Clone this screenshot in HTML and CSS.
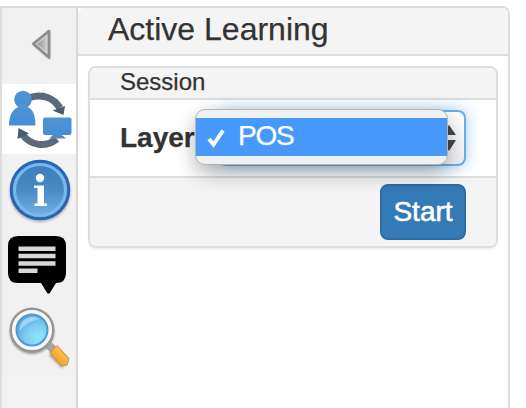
FILE: index.html
```html
<!DOCTYPE html>
<html lang="en">
<head>
<meta charset="utf-8">
<title>Active Learning</title>
<link rel="stylesheet" href="styles.css">
</head>
<body>
<div class="workspace">
  <nav class="sidebar">
    <div class="tab tab-collapse">
      <svg width="74" height="76" viewBox="2 8 74 76">
        <defs>
          <linearGradient id="arrow"><stop offset="0" stop-color="#999"/><stop offset=".5" stop-color="#aeb0b3"/><stop offset="1" stop-color="#ccc"/></linearGradient>
          <filter id="soft" x="-30%" y="-30%" width="160%" height="160%"><feGaussianBlur stdDeviation="1.2"/></filter>
        </defs>
        <path d="M33 45L50 32V60Z" fill="#777" opacity=".45" filter="url(#soft)"/>
        <path d="M33.300 43.800L49 31V57.500Z" fill="#d8d8d8" stroke="#8c8c8c" stroke-width="2.800" stroke-linejoin="round"/>
        <path d="M37 44L46.500 36V52Z" fill="url(#arrow)"/>
      </svg>
    </div>
    <div class="tab tab-active">
      <svg width="74" height="70" viewBox="2 84 74 70">
        <defs><linearGradient id="person" x2="0" y2="1"><stop stop-color="#5293cf"/><stop offset="1" stop-color="#438fd9"/></linearGradient></defs>
        <g fill="none" stroke="#5a6a7b" stroke-width="7">
          <path d="M30 97.500C42 94 53 97 60 108"/>
          <path d="M22 134C31 146 45 148 57 139"/>
        </g>
        <path d="M65 106L63.500 115L52.500 110.500ZM17.500 139L18.500 128L29 133.500Z" fill="#4c5c6e"/>
        <circle cx="23" cy="99.500" r="8.800" fill="url(#person)"/>
        <path d="M9 125.500C9 114 14 108 19 107V104H27V107C32 108 35.500 114 35.500 125.500Z" fill="url(#person)"/>
        <rect x="43" y="117.500" width="28.500" height="17.500" rx="2" fill="url(#person)"/>
        <path d="M53 135H62L66 138.500H49Z" fill="#5d88b4"/>
      </svg>
    </div>
    <div class="tab tab-info">
      <svg width="74" height="76" viewBox="2 154 74 76">
        <defs>
          <linearGradient id="info" x2="0" y2="1"><stop stop-color="#397dbb"/><stop offset=".5" stop-color="#488bc5"/><stop offset="1" stop-color="#72afe0"/></linearGradient>
        </defs>
        <ellipse cx="40" cy="192" rx="30.500" ry="30" fill="#555" opacity=".4" filter="url(#soft)"/>
        <circle cx="40" cy="190" r="29.500" fill="#2c69b1" stroke="#2464b2" stroke-width="1.500"/>
        <circle cx="40" cy="190" r="25.500" fill="url(#info)" stroke="#79b8eb" stroke-width="3.200"/>
        <circle cx="40" cy="178" r="4.200" fill="#fff"/>
        <path d="M34 185.500H44V203.500H47V206H34.500V203.500H37.500V188H34Z" fill="#fff"/>
      </svg>
    </div>
    <div class="tab tab-comment">
      <svg width="74" height="74" viewBox="2 230 74 74">
        <path d="M18 236H56Q66 236 66 246V273Q66 283 56 283L49.500 293.500H47.500L41 283H18Q8 283 8 273V246Q8 236 18 236Z"/>
        <path d="M18.500 248.700H55.500M18.500 256H55.500M18.500 263.500H55.500M18.500 270.700H37.500" stroke="#d8d8d8" stroke-width="4.500"/>
      </svg>
    </div>
    <div class="tab tab-search">
      <svg width="74" height="72" viewBox="2 304 74 72">
        <defs>
          <radialGradient id="lens" cx=".7" cy=".75" r=".8"><stop stop-color="#8de9ff"/><stop offset=".55" stop-color="#7dc7f0"/><stop offset="1" stop-color="#55a7e1"/></radialGradient>
          <linearGradient id="handle" x1="0" y1="1" x2="1" y2="0"><stop stop-color="#e18a12"/><stop offset=".6" stop-color="#ffb94a"/><stop offset="1" stop-color="#d99127"/></linearGradient>
        </defs>
        <g opacity=".4" filter="url(#soft)"><circle cx="32" cy="332" r="22"/><path d="M52 352L65 365" stroke="#333" stroke-width="9"/></g>
        <path d="M46 343L55 351" stroke="#a3a3a3" stroke-width="8"/>
        <circle cx="32" cy="330" r="21.300" fill="#f8f8f8" stroke="#969696" stroke-width="2.500"/>
        <circle cx="32" cy="330" r="15.500" fill="url(#lens)" stroke="#4f98d2" stroke-width="2"/>
        <path d="M20 331C18 321 29 313 40 319C33 320 24 324 20 331Z" fill="#c8eaff" opacity=".6"/>
        <path d="M50 352.500L57 345.500L69 358.500L67 365L61 365.500Z" fill="url(#handle)" stroke="#d39132"/>
      </svg>
    </div>
    <div class="sidebar-rest"></div>
  </nav>
  <main class="panel">
    <header class="panel-title">Active Learning</header>
    <section class="card">
      <div class="card-header">Session</div>
      <div class="card-body">
        <label class="field-label">Layer</label>
        <div class="select">
          <svg class="select-arrows" width="14" height="26" viewBox="0 0 14 26"><path d="M0 10L7 0L14 10ZM0 15H14L7 26Z" fill="#484848"/></svg>
          <div class="menu">
            <div class="option">
              <svg width="20" height="20" viewBox="0 0 20 20"><path d="M3 11L7.500 16.500L17 2.500" fill="none" stroke="#fff" stroke-width="4"/></svg>
              <span class="option-text">POS</span>
            </div>
          </div>
        </div>
      </div>
      <footer class="card-footer"><button class="button">Start</button></footer>
    </section>
  </main>
</div>
</body>
</html>
```
FILE: styles.css
```css
* { box-sizing: border-box; }
body {
  margin: 0;
  height: 408px;
  overflow: hidden;
  background: #fff;
  color: #333;
  font-family: "Liberation Sans", Arial, sans-serif;
  -webkit-text-stroke: .25px currentColor;
}
.workspace {
  display: flex;
  width: 510px;
  height: 420px;
  margin-top: 6px;
  border: 2px solid #ddd;
  border-bottom: 0;
  border-top-right-radius: 8px;
}
.sidebar {
  display: flex;
  flex-direction: column;
  width: 76px;
  border-right: 2px solid #d8d8d8;
  background: #f1f1f1;
}
.tab { flex: none; }
.tab svg { display: block; }
.tab-active { background: #fff; }
.sidebar-rest { flex: 1; background: #f3f3f3; }
.panel { flex: 1; }
.panel-title {
  height: 48px;
  padding-left: 30px;
  border-bottom: 2px solid #ddd;
  border-radius: 6px 6px 0 0;
  background: #f4f4f4;
  font-size: 32px;
  line-height: 43px;
}
.card {
  width: 410px;
  height: 182px;
  margin: 10px 0 0 10px;
  border: 2px solid #ddd;
  border-radius: 8px;
  box-shadow: 0 2px 2px rgba(0, 0, 0, .05);
}
.card-header {
  height: 32px;
  padding-left: 30px;
  border-bottom: 2px solid #ddd;
  border-radius: 6px 6px 0 0;
  background: #f4f4f4;
  font-size: 24px;
  line-height: 28px;
}
.card-body {
  display: flex;
  align-items: center;
  height: 76px;
  padding: 0 30px;
}
.field-label {
  width: 98px;
  font-size: 28px;
  font-weight: bold;
}
.select {
  position: relative;
  display: flex;
  align-items: center;
  justify-content: flex-end;
  width: 248px;
  height: 56px;
  padding-right: 8px;
  border: 2px solid #66afe9;
  border-radius: 8px;
  background: linear-gradient(#fff, #f0f0f0);
  box-shadow: 0 0 16px rgba(102, 175, 233, .6);
}
.menu {
  position: absolute;
  top: -3px;
  left: -25px;
  width: 253px;
  height: 56px;
  padding: 8px 0;
  border: 1px solid #b4b4b4;
  border-radius: 10px;
  background: #f0f0f0;
  box-shadow: 0 8px 20px rgba(0, 0, 0, .3);
}
.option {
  display: flex;
  align-items: center;
  height: 38px;
  padding-left: 10px;
  background: #4899fc;
  color: #fff;
  font-size: 28px;
  line-height: 36px;
}
.option svg { margin-top: 2px; }
.option-text {
  margin: -2px 0 0 12px;
  letter-spacing: -1.2px;
}
.card-footer {
  display: flex;
  justify-content: flex-end;
  height: 70px;
  padding: 6px 30px;
  border-top: 2px solid #ddd;
  border-radius: 0 0 6px 6px;
  background: #f4f4f4;
}
.button {
  width: 86px;
  height: 56px;
  padding: 0;
  border: 2px solid #2e6da4;
  border-radius: 8px;
  background: #337ab7;
  color: #fff;
  font: 28px "Liberation Sans", Arial, sans-serif;
  -webkit-text-stroke: .6px #fff;
}
```
